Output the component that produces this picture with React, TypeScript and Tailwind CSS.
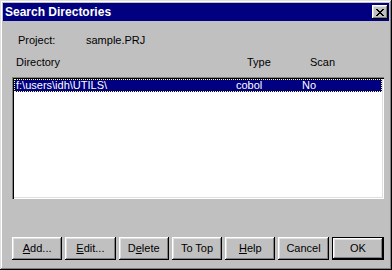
import React from "react";

const raised =
  "shadow-[inset_-1px_-1px_#000,inset_1px_1px_#fff,inset_-2px_-2px_#808080,inset_2px_2px_#dfdfdf]";

function Btn({ children, def }: { children: React.ReactNode; def?: boolean }) {
  return (
    <div className={`flex-1 h-[23px] ${def ? "border border-black" : ""}`}>
      <div
        className={`w-full h-full bg-[#c0c0c0] ${raised} flex items-center justify-center text-black`}
      >
        {children}
      </div>
    </div>
  );
}

export default function App() {
  return (
    <div
      className="w-[392px] h-[270px] bg-[#c0c0c0] p-[3px] shadow-[inset_-1px_-1px_#000,inset_1px_1px_#dfdfdf,inset_-2px_-2px_#808080,inset_2px_2px_#fff] flex flex-col text-[11px] text-black"
      style={{ fontFamily: '"Liberation Sans", Arial, sans-serif' }}
    >
      <div className="h-[18px] bg-[#000080] flex items-center justify-between pl-[2px] pr-[1px]">
        <span className="text-white font-bold text-[12px] leading-none">Search Directories</span>
        <div
          className={`w-[16px] h-[14px] bg-[#c0c0c0] ${raised} flex items-center justify-center`}
        >
          <svg width="8" height="7" viewBox="0 0 8 7" shapeRendering="crispEdges">
            <path
              d="M0 0h2v1H0zM6 0h2v1H6zM1 1h2v1H1zM5 1h2v1H5zM2 2h4v1H2zM3 3h2v1H3zM2 4h4v1H2zM1 5h2v1H1zM5 5h2v1H5zM0 6h2v1H0zM6 6h2v1H6z"
              fill="#000"
            />
          </svg>
        </div>
      </div>
      <div className="flex flex-col pl-[9px] pr-[5px] flex-1">
        <div className="flex mt-[13px] h-[13px] items-center">
          <span className="ml-[6px] w-[68px]">Project:</span>
          <span>sample.PRJ</span>
        </div>
        <div className="flex mt-[9px] h-[13px] items-center">
          <span className="ml-[4px] w-[231px]">Directory</span>
          <span className="w-[63px]">Type</span>
          <span>Scan</span>
        </div>
        <div className="mt-[8px] h-[122px] bg-white p-[2px] shadow-[inset_1px_1px_#808080,inset_2px_2px_#000,inset_-1px_-1px_#fff,inset_-2px_-2px_#dfdfdf]">
          <div className="h-[13px] bg-[#000080] text-white flex items-center outline outline-1 outline-dotted outline-[#ffff80] -outline-offset-1">
            <span className="ml-[2px] w-[220px]">f:\users\idh\UTILS\</span>
            <span className="w-[66px]">cobol</span>
            <span>No</span>
          </div>
        </div>
        <div className="mt-[38px] flex gap-[3px]">
          <Btn>
            <span>
              <u>A</u>dd...
            </span>
          </Btn>
          <Btn>
            <span>
              <u>E</u>dit...
            </span>
          </Btn>
          <Btn>
            <span>
              D<u>e</u>lete
            </span>
          </Btn>
          <Btn>To Top</Btn>
          <Btn>
            <span>
              <u>H</u>elp
            </span>
          </Btn>
          <Btn>Cancel</Btn>
          <Btn def>OK</Btn>
        </div>
      </div>
    </div>
  );
}
